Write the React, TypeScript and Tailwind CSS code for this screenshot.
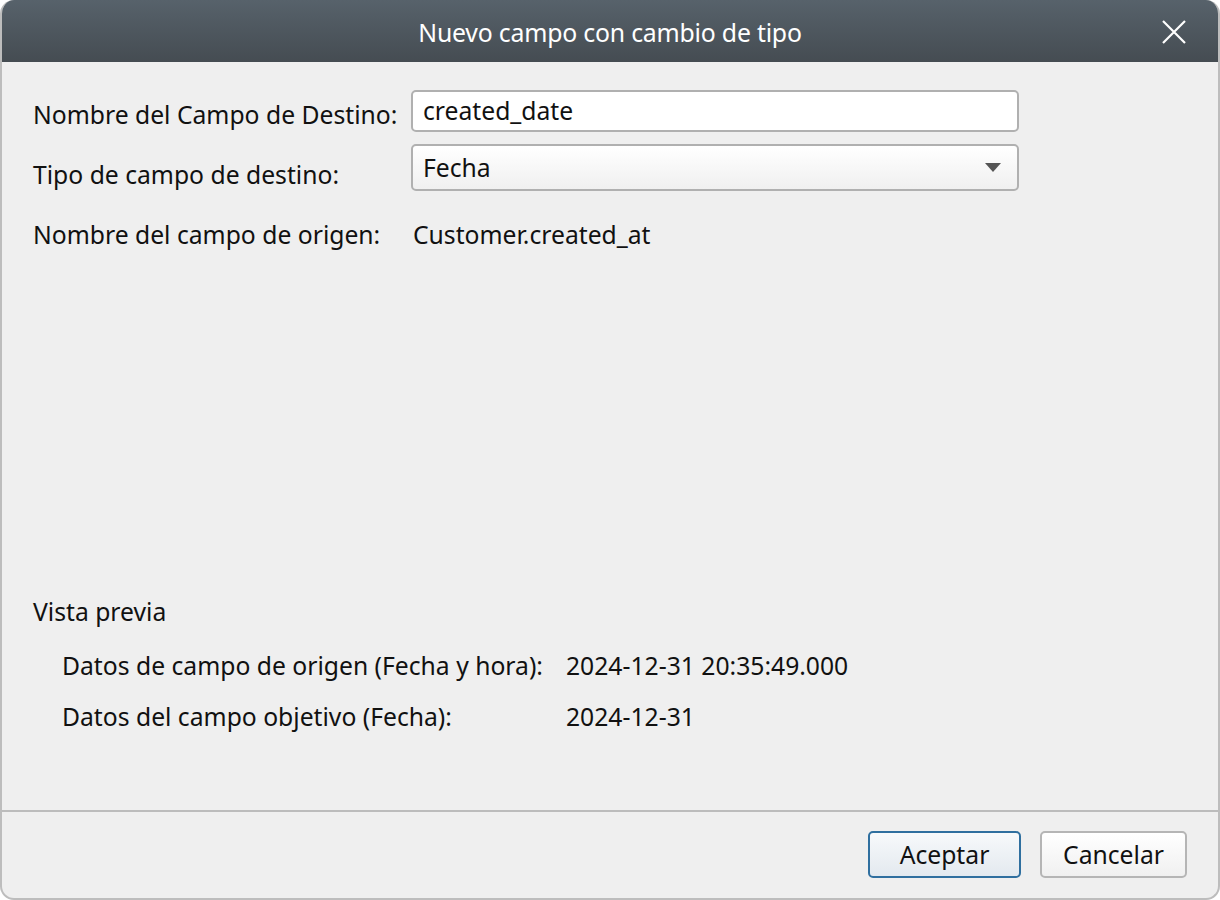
import React from "react";

const font = { fontFamily: '"Noto Sans", "Open Sans", sans-serif' };

export default function App() {
  return (
    <div className="w-[1220px] h-[900px] bg-white" style={font}>
      <div className="w-[1220px] h-[900px] flex flex-col rounded-[14px] overflow-hidden border-2 border-[#bdbdbd] border-t-0 bg-[#efefef]">
        <div className="h-[62px] shrink-0 bg-gradient-to-b from-[#57626b] to-[#454c52] flex items-center justify-center relative -mx-[2px] pt-[3px]">
          <span className="text-white text-[24.8px] tracking-[-0.2px]">Nuevo campo con cambio de tipo</span>
          <svg className="absolute right-[34px] top-[20px]" width="24" height="24" viewBox="0 0 24 24">
            <path d="M1 1 L23 23 M23 1 L1 23" stroke="white" strokeWidth="2.2" fill="none" />
          </svg>
        </div>
        <div className="flex-1 flex flex-col pl-[31px] pr-[199px] pt-[28px] text-[24.7px] text-[#111]">
          <div className="flex items-center h-[42px]">
            <span className="w-[378px] pt-[7px]">Nombre del Campo de Destino:</span>
            <div className="flex-1 h-[42px] bg-white border-2 border-[#b0b0b0] rounded-[5px] flex items-center px-[10px]">
              created_date
            </div>
          </div>
          <div className="flex items-center h-[47px] mt-[12px]">
            <span className="w-[378px] pt-[15px]">Tipo de campo de destino:</span>
            <div className="flex-1 h-[47px] bg-gradient-to-b from-white to-[#f0f0f0] border-2 border-[#b0b0b0] rounded-[5px] flex items-center pl-[10px] pr-[16px] justify-between">
              <span>Fecha</span>
              <svg width="16" height="9" viewBox="0 0 16 9">
                <path d="M0 0 L16 0 L8 9 Z" fill="#555" />
              </svg>
            </div>
          </div>
          <div className="flex items-center mt-[25px]">
            <span className="w-[380px]">Nombre del campo de origen:</span>
            <span>Customer.created_at</span>
          </div>
          <div className="flex-1" />
          <div className="pb-[75px]">
            <div>Vista previa</div>
            <div className="pl-[29px] mt-[17px] flex flex-col gap-[14px]">
              <div className="flex">
                <span className="w-[504px]">Datos de campo de origen (Fecha y hora):</span>
                <span>2024-12-31 20:35:49.000</span>
              </div>
              <div className="flex">
                <span className="w-[504px]">Datos del campo objetivo (Fecha):</span>
                <span>2024-12-31</span>
              </div>
            </div>
          </div>
        </div>
        <div className="h-[88px] shrink-0 border-t-2 border-[#bcbcbc] flex items-start justify-end pr-[31px] pt-[19px] gap-[19px] text-[24.7px] text-[#111]">
          <button className="w-[153px] h-[47px] rounded-[5px] border-2 border-[#2f6f9f] bg-gradient-to-b from-[#f7f9fb] to-[#e3e9ef]">Aceptar</button>
          <button className="w-[147px] h-[47px] rounded-[5px] border-2 border-[#b5b5b5] bg-gradient-to-b from-white to-[#f0f0f0]">Cancelar</button>
        </div>
      </div>
    </div>
  );
}
